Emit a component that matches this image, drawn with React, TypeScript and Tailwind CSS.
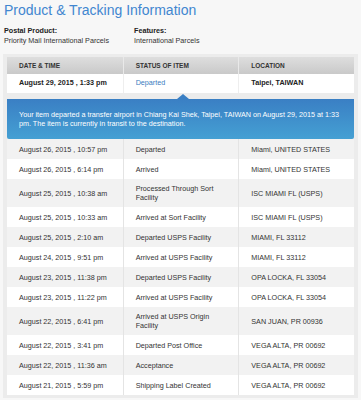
type Scan = {
  date: string
  status: string
  location: string
}

const history: Scan[] = [
  { date: "August 26, 2015 , 10:57 pm", status: "Departed", location: "Miami, UNITED STATES" },
  { date: "August 26, 2015 , 6:14 pm", status: "Arrived", location: "Miami, UNITED STATES" },
  { date: "August 25, 2015 , 10:38 am", status: "Processed Through Sort Facility", location: "ISC MIAMI FL (USPS)" },
  { date: "August 25, 2015 , 10:33 am", status: "Arrived at Sort Facility", location: "ISC MIAMI FL (USPS)" },
  { date: "August 25, 2015 , 2:10 am", status: "Departed USPS Facility", location: "MIAMI, FL 33112" },
  { date: "August 24, 2015 , 9:51 pm", status: "Arrived at USPS Facility", location: "MIAMI, FL 33112" },
  { date: "August 23, 2015 , 11:38 pm", status: "Departed USPS Facility", location: "OPA LOCKA, FL 33054" },
  { date: "August 23, 2015 , 11:22 pm", status: "Arrived at USPS Facility", location: "OPA LOCKA, FL 33054" },
  { date: "August 22, 2015 , 6:41 pm", status: "Arrived at USPS Origin Facility", location: "SAN JUAN, PR 00936" },
  { date: "August 22, 2015 , 3:41 pm", status: "Departed Post Office", location: "VEGA ALTA, PR 00692" },
  { date: "August 22, 2015 , 11:36 am", status: "Acceptance", location: "VEGA ALTA, PR 00692" },
  { date: "August 21, 2015 , 5:59 pm", status: "Shipping Label Created", location: "VEGA ALTA, PR 00692" },
]

function HistoryRow({ scan, shaded }: { scan: Scan; shaded: boolean }) {
  const bg = shaded ? "bg-[#f2f2f2]" : "bg-white"
  return (
    <div className={`grid grid-cols-3 ${bg} text-[7.2px] leading-[9px] text-[#333]`}>
      <div className="flex min-h-[20px] items-center px-3 py-[5px]">{scan.date}</div>
      <div className="flex items-center border-l border-[#e4e4e4] py-[5px] pl-3 pr-4">{scan.status}</div>
      <div className="flex items-center border-l border-[#e4e4e4] px-3 py-[5px]">{scan.location}</div>
    </div>
  )
}

export default function App() {
  return (
    <div
      className="h-[400px] w-[361px] overflow-hidden bg-[#f7f7f7]"
      style={{ fontFamily: '"Liberation Sans", Arial, sans-serif' }}
    >
      <h1 className="px-1 pt-[1px] text-[14px] leading-[18px] text-[#4186d0]">Product &amp; Tracking Information</h1>

      <div className="mt-[7px] grid grid-cols-[130px_1fr] px-1 text-[7.2px] leading-[10px] text-[#333]">
        <div>
          <p className="font-bold text-[#222]">Postal Product:</p>
          <p>Priority Mail International Parcels</p>
        </div>
        <div>
          <p className="font-bold text-[#222]">Features:</p>
          <p>International Parcels</p>
        </div>
      </div>

      <div className="mx-[3px] mt-[8px] bg-[#ececec] px-1 pb-[3px] pt-[3px]">
        {/* column headings */}
        <div className="grid h-[17px] grid-cols-3 bg-gradient-to-b from-[#dedede] to-[#c9c9c9] text-[6.5px] font-bold uppercase text-[#333]">
          <div className="flex items-center px-3">Date &amp; Time</div>
          <div className="flex items-center border-l border-[#e9e9e9] px-3">Status of Item</div>
          <div className="flex items-center border-l border-[#e9e9e9] px-3">Location</div>
        </div>

        {/* latest event */}
        <div className="grid h-[19px] grid-cols-3 bg-white text-[7.2px] font-bold text-[#222]">
          <div className="flex items-center px-3">August 29, 2015 , 1:33 pm</div>
          <div className="flex items-center border-l border-[#eeeeee] px-3 font-normal text-[#3a7cc0]">Departed</div>
          <div className="flex items-center border-l border-[#eeeeee] px-3">Taipei, TAIWAN</div>
        </div>

        <div className="relative mt-[6px] rounded-b-[2px] bg-gradient-to-b from-[#3a7fc4] to-[#45a0d3] px-3 pb-[11px] pt-[12px] text-[7.2px] leading-[8.5px] text-white">
          <span className="absolute -top-[5px] left-[170px] h-0 w-0 border-x-[6px] border-b-[5px] border-x-transparent border-b-[#3a7fc4]" />
          Your item departed a transfer airport in Chiang Kai Shek, Taipei, TAIWAN on August 29, 2015 at 1:33 pm. The item is currently in transit to the destination.
        </div>

        {history.map((scan, i) => (
          <HistoryRow key={i} scan={scan} shaded={i % 2 === 0} />
        ))}
      </div>
    </div>
  )
}
